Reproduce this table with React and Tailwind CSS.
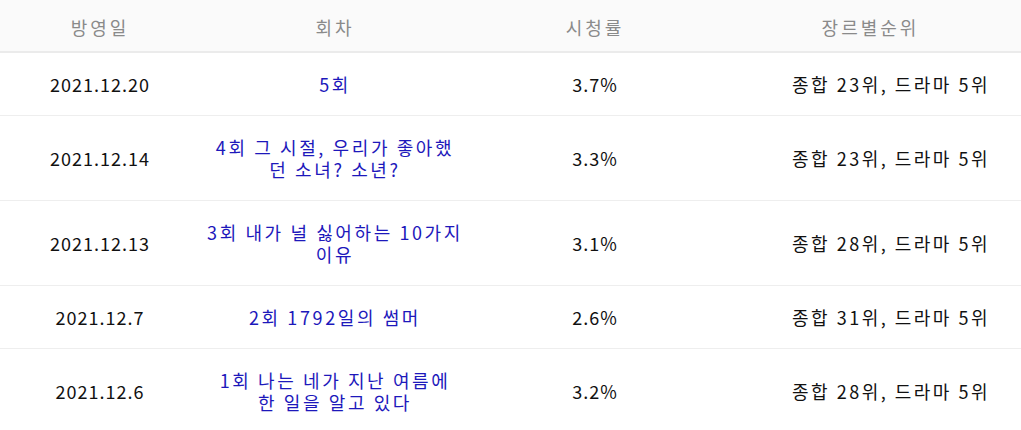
const episodes = [
  { date: "2021.12.20", title: ["5회"], rating: "3.7%", rank: "종합 23위, 드라마 5위" },
  { date: "2021.12.14", title: ["4회 그 시절, 우리가 좋아했", "던 소녀? 소년?"], rating: "3.3%", rank: "종합 23위, 드라마 5위" },
  { date: "2021.12.13", title: ["3회 내가 널 싫어하는 10가지", "이유"], rating: "3.1%", rank: "종합 28위, 드라마 5위" },
  { date: "2021.12.7", title: ["2회 1792일의 썸머"], rating: "2.6%", rank: "종합 31위, 드라마 5위" },
  { date: "2021.12.6", title: ["1회 나는 네가 지난 여름에", "한 일을 알고 있다"], rating: "3.2%", rank: "종합 28위, 드라마 5위" },
];

export default function App() {
  return (
    <div
      className="w-[1021px] h-[430px] overflow-hidden bg-white text-[18px] tracking-[1px]"
      style={{ fontFamily: '"Noto Sans CJK KR", "Noto Sans", sans-serif' }}
    >
      <div className="grid grid-cols-[200px_270px_250px_1fr] h-[53px] pt-[4px] bg-[#fafafa] border-b-2 border-[#ebebeb] text-[#8a8a8a] items-center text-center tracking-[3px]">
        <div>방영일</div>
        <div>회차</div>
        <div>시청률</div>
        <div>장르별순위</div>
      </div>
      {episodes.map((ep) => (
        <div
          key={ep.date}
          className="grid grid-cols-[200px_270px_250px_1fr] items-center py-5 border-b border-[#eeeeee] leading-[22px] text-[#111]"
        >
          <div className="text-center">{ep.date}</div>
          <div className="text-center text-[#1d18bb] tracking-[2.6px]">
            {ep.title.map((line) => (
              <div key={line}>{line}</div>
            ))}
          </div>
          <div className="text-center">{ep.rating}</div>
          <div className="text-right pr-[31px] tracking-[2.5px]">{ep.rank}</div>
        </div>
      ))}
    </div>
  );
}
